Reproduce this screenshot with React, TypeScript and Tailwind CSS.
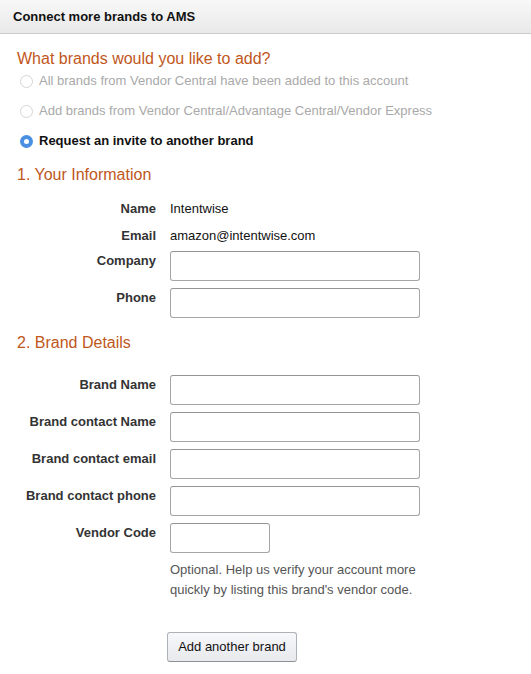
import React from 'react';

const FONT = { fontFamily: '"Liberation Sans", Arial, sans-serif' };

const Radio = ({ checked, disabled, label }: { checked?: boolean; disabled?: boolean; label: string }) => (
    <div className="flex items-center h-5 pl-[3px] gap-[6px]">
        {checked ? (
            <span className="w-[13px] h-[13px] rounded-full bg-[#4a90e2] flex items-center justify-center shrink-0">
                <span className="w-[5px] h-[5px] rounded-full bg-white" />
            </span>
        ) : (
            <span className="w-[13px] h-[13px] rounded-full border border-[#d5d5d5] bg-white shrink-0" />
        )}
        <span className={disabled ? 'text-[#a9a9a9]' : 'text-[#111] font-bold'}>{label}</span>
    </div>
);

const Field = ({ label, narrow, className = '' }: { label: string; narrow?: boolean; className?: string }) => (
    <div className={`grid grid-cols-[139px_1fr] gap-x-[14px] ${className}`}>
        <label className="text-right font-bold text-[#333] leading-[18px] pt-px">{label}</label>
        <input
            type="text"
            className={`h-[30px] ${narrow ? 'w-[100px]' : 'w-[250px]'} border border-[#a6a6a6] border-t-[#949494] rounded-[3px] bg-white outline-none`}
        />
    </div>
);

const Info = ({ label, value, className = '' }: { label: string; value: string; className?: string }) => (
    <div className={`grid grid-cols-[139px_1fr] gap-x-[14px] leading-5 ${className}`}>
        <span className="text-right font-bold text-[#333]">{label}</span>
        <span className="text-[#111]">{value}</span>
    </div>
);

export default function App() {
    return (
        <div className="w-[531px] h-[674px] bg-white text-[13px] overflow-hidden" style={FONT}>
            <div className="h-[34px] flex items-center px-[13px] bg-gradient-to-b from-[#f8f8f8] to-[#e9e9e9] border-b border-[#cccccc]">
                <span className="font-bold text-[#111]">Connect more brands to AMS</span>
            </div>

            <div className="pl-[17px]">
                <h2 className="mt-[15px] text-[16px] leading-5 text-[#c0571b]">What brands would you like to add?</h2>
                <div className="mt-[2px] flex flex-col gap-[10px]">
                    <Radio disabled label="All brands from Vendor Central have been added to this account" />
                    <Radio disabled label="Add brands from Vendor Central/Advantage Central/Vendor Express" />
                    <Radio checked label="Request an invite to another brand" />
                </div>

                <h2 className="mt-[14px] text-[16px] leading-5 text-[#c0571b]">1. Your Information</h2>
                <Info className="mt-[14px]" label="Name" value="Intentwise" />
                <Info className="mt-[7px]" label="Email" value="amazon@intentwise.com" />
                <Field className="mt-[5px]" label="Company" />
                <Field className="mt-[7px]" label="Phone" />

                <h2 className="mt-[15px] text-[16px] leading-5 text-[#c0571b]">2. Brand Details</h2>
                <Field className="mt-[22px]" label="Brand Name" />
                <Field className="mt-[7px]" label="Brand contact Name" />
                <Field className="mt-[7px]" label="Brand contact email" />
                <Field className="mt-[7px]" label="Brand contact phone" />
                <Field className="mt-[7px]" label="Vendor Code" narrow />

                <div className="grid grid-cols-[139px_1fr] gap-x-[14px] mt-[7px]">
                    <span />
                    <p className="text-[#555] leading-5 w-[260px]">
                        Optional. Help us verify your account more quickly by listing this brand's vendor code.
                    </p>
                </div>

                <div className="grid grid-cols-[139px_1fr] gap-x-[14px] mt-[32px]">
                    <span />
                    <button className="-ml-[3px] w-[130px] h-[30px] rounded-[3px] border border-[#adb1b8] border-b-[#8d9096] bg-gradient-to-b from-[#f7f8fa] to-[#e7e9ec] text-[#111] text-[13px]">
                        Add another brand
                    </button>
                </div>
            </div>
        </div>
    );
}
